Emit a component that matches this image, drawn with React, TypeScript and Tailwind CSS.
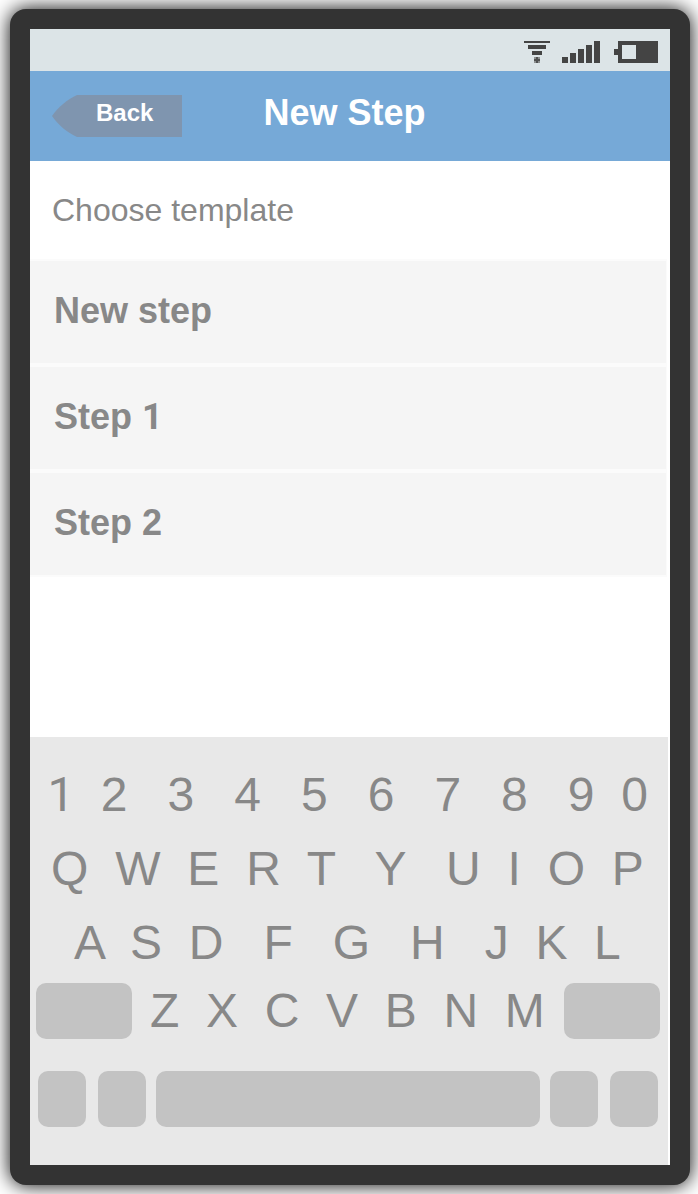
const steps = ["New step", "Step 1", "Step 2"];

const keyRows = [
  { keys: "1  2   3   4   5   6   7   8   9  0", style: "pl-[17.5px]" },
  { keys: "Q  W  E  R  T   Y   U  I  O  P", style: "pl-[21px] [word-spacing:0.08px]" },
  { keys: "A  S  D   F   G   H   J  K  L", style: "pl-[44px]" },
];

/* Sets the digit one in a face whose figure has no foot serif. */
function Label({ text }: { text: string }) {
  const at = text.indexOf("1");
  if (at < 0) return <>{text}</>;
  return (
    <>
      {text.slice(0, at)}
      <span className="inline-block w-[0.556em] font-[Roboto,sans-serif] leading-none">1</span>
      {text.slice(at + 1)}
    </>
  );
}

function StatusBar() {
  return (
    <div className="flex h-[42px] items-center justify-end gap-3 bg-[#dce4e7] pr-3 pt-[4px]">
      <svg width="26" height="22" fill="#444" shapeRendering="crispEdges">
        <path d="M0 0h26v2H0zM4 4h18v4H4zM8 10h10v4H8z" />
        <path d="M10 16h6v6h-6z" fill="#8c8f90" />
        <path d="M12 16h2v6h-2zM10 18h6v2h-6z" fill="#505151" />
      </svg>
      <svg width="38" height="22" fill="#444" shapeRendering="crispEdges">
        <path d="M0 16h6v6H0zM8 12h6v10H8zM16 8h6v14h-6zM24 4h6v18h-6zM32 0h6v22h-6z" />
      </svg>
      <svg width="44" height="22" fill="#444" shapeRendering="crispEdges" className="ml-[2px]">
        <path fillRule="evenodd" d="M4 0h40v22H4v-8H0V8h4zM8 4v14h14V4z" />
      </svg>
    </div>
  );
}

function Header() {
  return (
    <header className="flex h-[90px] items-start bg-[#76a9d7] pl-[22px] font-bold text-white">
      <button className="relative mt-6 flex h-[42px] w-[130px] items-start pl-[44px] text-[24px] leading-9">
        <svg className="absolute left-0 top-0" width="130" height="42">
          <path d="M130 0H25C16 4 6 12 0 21c6 9 16 17 25 21h105z" fill="#7f95af" />
        </svg>
        <span className="relative">Back</span>
      </button>
      <h1 className="ml-[81.5px] mt-[21px] text-[36px] leading-[42px]">New Step</h1>
    </header>
  );
}

function Key({ width }: { width: string }) {
  return <button className={`h-14 shrink-0 rounded-[10px] bg-[#c3c3c3] ${width}`} />;
}

function Keyboard() {
  return (
    <div className="mr-[2px] h-[428px] bg-[#e8e8e8] pt-[21px] text-[48px] text-[#888]">
      {keyRows.map((row) => (
        <div key={row.keys} className={`h-[74px] whitespace-pre leading-[74px] ${row.style}`}>
          <Label text={row.keys} />
        </div>
      ))}
      <div className="mt-[3px] flex pl-[6px]">
        <Key width="w-24" />
        <div className="w-[432px] whitespace-pre pl-[18px] leading-[56px]">Z  X  C  V  B  N  M</div>
        <Key width="w-24" />
      </div>
      <div className="mt-8 flex pl-2">
        <Key width="w-12" />
        <div className="w-3" />
        <Key width="w-12" />
        <div className="w-2.5" />
        <Key width="w-96" />
        <div className="w-2.5" />
        <Key width="w-12" />
        <div className="w-3" />
        <Key width="w-12" />
      </div>
    </div>
  );
}

export default function App() {
  return (
    <div className="h-[1194px] w-[698px] overflow-hidden bg-white px-[10px] pt-[9px] font-['Liberation_Sans',Arial,sans-serif] [text-rendering:optimizeLegibility]">
      <div className="flow-root h-[1176px] w-[680px] rounded-2xl bg-[#333] p-5 shadow-[0_0_20px_#000]">
        <div className="flex h-[1136px] flex-col bg-white">
          <StatusBar />
          <Header />
          <p className="h-[98px] pl-[22px] text-[32px] leading-[98px] text-[#888]">Choose template</p>
          <ul className="mr-[3px] text-[36px] font-bold text-[#888]">
            {steps.map((step) => (
              <li
                key={step}
                className="h-[106px] border-y-2 border-r border-[#fbfbfb] bg-[#f5f5f5] pl-6 leading-[100px]"
              >
                <Label text={step} />
              </li>
            ))}
          </ul>
          <div className="flex-1" />
          <Keyboard />
        </div>
      </div>
    </div>
  );
}
